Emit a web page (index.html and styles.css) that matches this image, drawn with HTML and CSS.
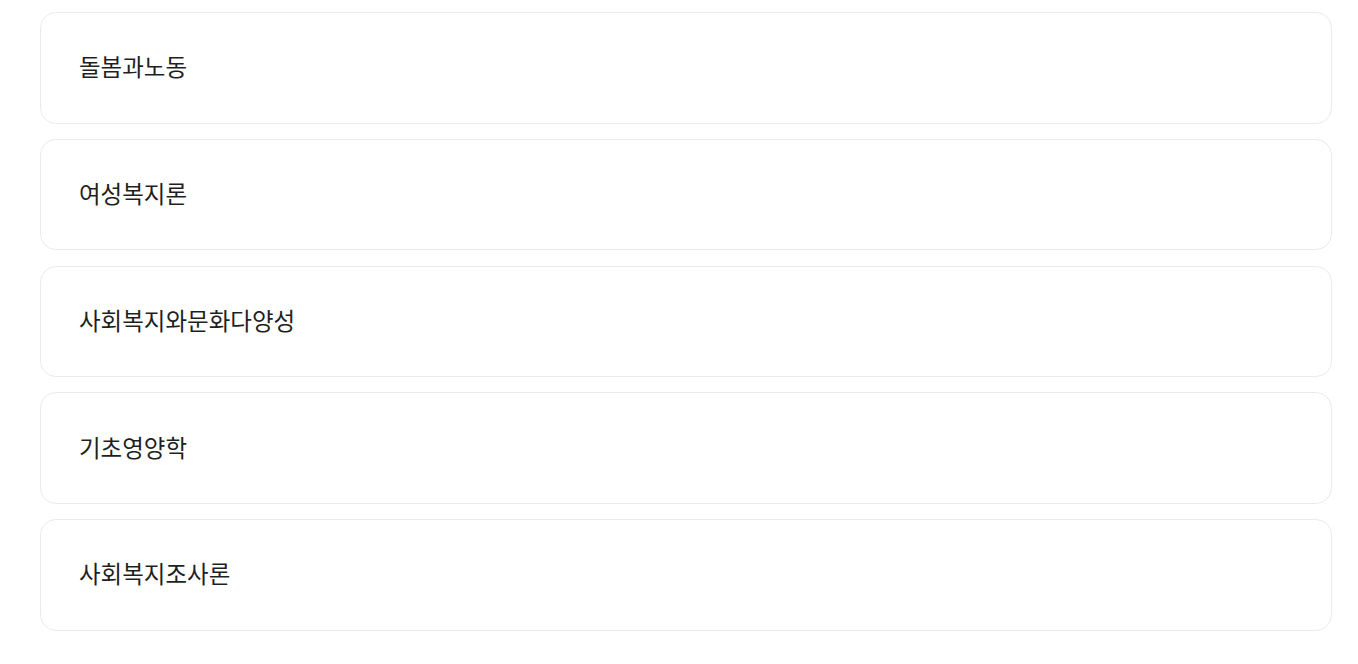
FILE: index.html
```html
<!DOCTYPE html>
<html lang="ko">
<head>
<meta charset="utf-8">
<link rel="stylesheet" href="styles.css">
</head>
<body>
<ul class="list">
  <li class="card">돌봄과노동</li>
  <li class="card">여성복지론</li>
  <li class="card">사회복지와문화다양성</li>
  <li class="card">기초영양학</li>
  <li class="card">사회복지조사론</li>
</ul>
</body>
</html>
```
FILE: styles.css
```css
html, body {
  margin: 0;
  padding: 0;
  background: #ffffff;
}
body {
  font-family: "Noto Sans CJK KR", "Noto Sans", sans-serif;
  color: #1f1f1f;
}
.list {
  list-style: none;
  margin: 0;
  padding: 12px 26px 0 40px;
  display: flex;
  flex-direction: column;
  gap: 15.25px;
}
.card {
  box-sizing: border-box;
  height: 111.5px;
  border: 1px solid #ebebeb;
  border-radius: 16px;
  padding: 0 38px 3px;
  display: flex;
  align-items: center;
  font-size: 23.5px;
  line-height: 34px;
}
```
